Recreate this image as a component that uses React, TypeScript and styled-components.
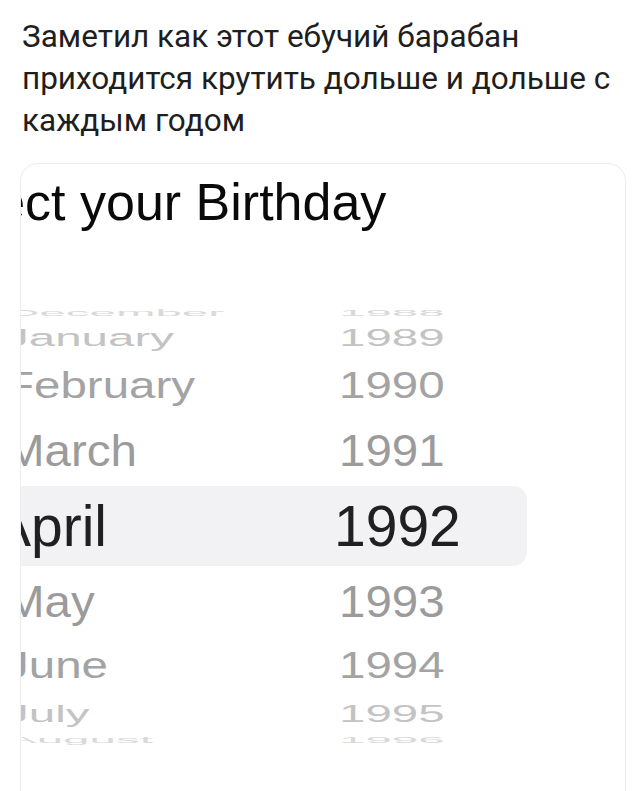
import styled, { createGlobalStyle } from "styled-components";

const GlobalStyle = createGlobalStyle`
  html, body {
    margin: 0;
    padding: 0;
    background: #ffffff;
  }
  body {
    font-family: Roboto, "Noto Sans", sans-serif;
  }
`;

// wheel geometry: drum radius and the angle between two neighbouring rows
const RADIUS = 218;
const STEP = 20;
const SELECTED_HEIGHT = 80;

const MONTHS = [
  "December",
  "January",
  "February",
  "March",
  "April",
  "May",
  "June",
  "July",
  "August",
];
const YEARS = [1988, 1989, 1990, 1991, 1992, 1993, 1994, 1995, 1996];
const SELECTED = 4;

const TONES = ["#202022", "#9b9b9b", "#a3a3a3", "#c3c3c3", "#d9d9d9"];

const rad = (deg: number) => (deg * Math.PI) / 180;

function rowMetrics(offset: number) {
  const angle = offset * STEP;
  const height =
    offset === 0
      ? SELECTED_HEIGHT
      : RADIUS * (Math.sin(rad(angle + STEP / 2)) - Math.sin(rad(angle - STEP / 2)));
  return { height, squash: Math.cos(rad(angle)) };
}

const Page = styled.div`
  width: 640px;
  height: 791px;
  overflow: hidden;
  background: #ffffff;
  display: flex;
  flex-direction: column;
`;

const Post = styled.p`
  margin: 0;
  padding: 16px 10px 0 22px;
  font-family: Roboto, "Noto Sans", sans-serif;
  font-size: 31.5px;
  line-height: 42px;
  color: #1e1e1e;
`;

const Card = styled.section`
  margin: 21px 14px 0 20px;
  min-height: 700px;
  flex-shrink: 0;
  border: 1px solid #ececec;
  border-radius: 18px;
  background: #ffffff;
  overflow: hidden;
  display: flex;
  flex-direction: column;
`;

const Title = styled.h1`
  margin: 12px 0 0 -100px;
  font-family: "Liberation Sans", Arial, sans-serif;
  font-weight: 400;
  font-size: 52px;
  line-height: 1;
  color: #0a0a0a;
  white-space: nowrap;
`;

const Wheel = styled.div`
  margin: 78px 0 0 -28px;
  width: 534px;
  display: flex;
  flex-direction: column;
`;

const Row = styled.div<{ $selected: boolean }>`
  display: flex;
  align-items: center;
  padding-left: ${(p) => (p.$selected ? 0 : 5)}px;
  background: ${(p) => (p.$selected ? "#f2f2f4" : "transparent")};
  border-radius: ${(p) => (p.$selected ? "0 14px 14px 0" : "0")};
  font-family: "Liberation Sans", Arial, sans-serif;
  font-size: ${(p) => (p.$selected ? 57 : 47.5)}px;
  line-height: 1;
  white-space: nowrap;
`;

const Label = styled.span<{ $tone: string }>`
  display: inline-block;
  flex-shrink: 0;
  color: ${(p) => p.$tone};
  transform-origin: left center;
`;

const MonthLabel = styled(Label)<{ $indent: number }>`
  width: 341px;
  padding-left: ${(p) => p.$indent}px;
  box-sizing: border-box;
`;

export default function App() {
  return (
    <>
      <GlobalStyle />
      <Page>
        <Post>
          Заметил как этот ебучий барабан приходится крутить дольше и дольше с
          каждым годом
        </Post>
        <Card>
          <Title>Select your Birthday</Title>
          <Wheel>
            {MONTHS.map((month, i) => {
              const offset = i - SELECTED;
              const selected = offset === 0;
              const { height, squash } = rowMetrics(offset);
              const tone = TONES[Math.abs(offset)];
              const squashStyle = { transform: `scaleY(${squash})` };
              return (
                <Row key={month} $selected={selected} style={{ height }}>
                  <MonthLabel
                    $tone={tone}
                    $indent={selected ? 0 : 7}
                    style={squashStyle}
                  >
                    {month}
                  </MonthLabel>
                  <Label $tone={tone} style={squashStyle}>
                    {YEARS[i]}
                  </Label>
                </Row>
              );
            })}
          </Wheel>
        </Card>
      </Page>
    </>
  );
}
